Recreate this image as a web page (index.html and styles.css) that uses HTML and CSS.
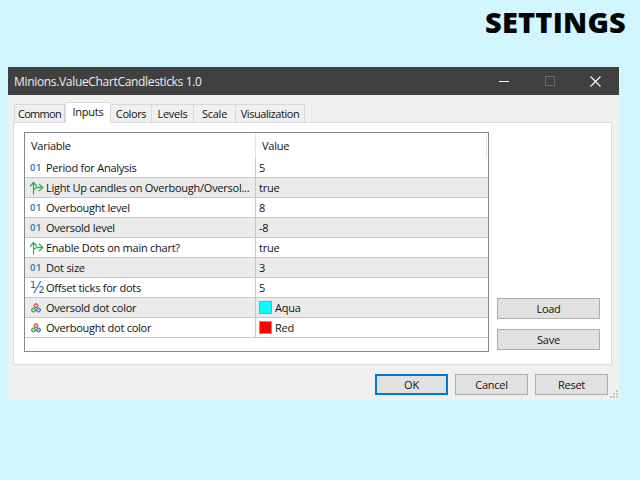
FILE: index.html
```html
<!DOCTYPE html>
<html lang="en">
<head>
<meta charset="utf-8">
<title>Settings</title>
<link rel="stylesheet" href="styles.css">
</head>
<body>
<svg class="defs" width="0" height="0" aria-hidden="true">
  <symbol id="arrows" viewBox="0 0 15 14">
    <path d="M4.5 13.5V2.5M1 5.5 4.5 1.5 8 5.5M4.5 9C6.5 5.5 9 6.5 13 6.5M10 3 13.8 6.5 10 10" fill="none" stroke="#1fb84a" stroke-width="1.2"/>
  </symbol>
  <symbol id="dots" viewBox="0 0 10 10">
    <circle cx="5" cy="2.7" r="2" fill="#f6a8a2" stroke="#d8402f" stroke-width="1"/>
    <circle cx="2.5" cy="7" r="2" fill="#a5dca5" stroke="#2f9a40" stroke-width="1"/>
    <circle cx="7.5" cy="7" r="2" fill="#a5c8f0" stroke="#2565b0" stroke-width="1"/>
  </symbol>
</svg>
<header class="banner"><h1 class="banner-title">SETTINGS</h1></header>
<main class="window">
  <div class="titlebar">
    <span class="title">Minions.ValueChartCandlesticks 1.0</span>
    <div class="controls">
      <span class="ctl ctl-min"></span>
      <span class="ctl ctl-max"></span>
      <svg class="ctl-close" width="11" height="11" viewBox="0 0 11 11"><path d="M.5.5 10.5 10.5M10.5.5.5 10.5" stroke="#fff" stroke-width="1.1"/></svg>
    </div>
  </div>
  <div class="tabs">
    <span class="tab tab-common">Common</span>
    <span class="tab tab-active">Inputs</span>
    <span class="tab tab-colors">Colors</span>
    <span class="tab tab-levels">Levels</span>
    <span class="tab tab-scale">Scale</span>
    <span class="tab tab-vis">Visualization</span>
  </div>
  <div class="panel">
    <div class="table">
      <div class="head">
        <div class="head-var">Variable</div>
        <div class="head-val">Value</div>
      </div>
      <div class="row"><div class="cell-name"><span class="ico ico-num">01</span>Period for Analysis</div><div class="cell-val">5</div></div>
      <div class="row alt"><div class="cell-name"><svg class="ico-svg"><use href="#arrows"/></svg>Light Up candles on Overbough/Oversol...</div><div class="cell-val">true</div></div>
      <div class="row"><div class="cell-name"><span class="ico ico-num">01</span>Overbought level</div><div class="cell-val">8</div></div>
      <div class="row alt"><div class="cell-name"><span class="ico ico-num">01</span>Oversold level</div><div class="cell-val">-8</div></div>
      <div class="row"><div class="cell-name"><svg class="ico-svg"><use href="#arrows"/></svg>Enable Dots on main chart?</div><div class="cell-val">true</div></div>
      <div class="row alt"><div class="cell-name"><span class="ico ico-num">01</span>Dot size</div><div class="cell-val">3</div></div>
      <div class="row"><div class="cell-name"><span class="ico ico-frac">½</span>Offset ticks for dots</div><div class="cell-val">5</div></div>
      <div class="row alt"><div class="cell-name"><svg class="ico-svg ico-dots"><use href="#dots"/></svg>Oversold dot color</div><div class="cell-val"><span class="swatch swatch-aqua"></span>Aqua</div></div>
      <div class="row"><div class="cell-name"><svg class="ico-svg ico-dots"><use href="#dots"/></svg>Overbought dot color</div><div class="cell-val"><span class="swatch swatch-red"></span>Red</div></div>
    </div>
    <div class="side">
      <button class="btn">Load</button>
      <button class="btn">Save</button>
    </div>
  </div>
  <div class="footer">
    <button class="btn btn-primary">OK</button>
    <button class="btn">Cancel</button>
    <button class="btn">Reset</button>
  </div>
  <svg class="grip" width="11" height="11" viewBox="0 0 11 11"><path d="M8 1h2v2H8zM5 4h2v2H5zM8 4h2v2H8zM2 7h2v2H2zM5 7h2v2H5zM8 7h2v2H8z" fill="#c4c4c4"/></svg>
</main>
</body>
</html>
```

FILE: styles.css
```css
* { box-sizing: border-box; }
html, body { height: 100%; }
body {
  margin: 0;
  background: #d1f6ff;
  font-family: "Open Sans", "Noto Sans", sans-serif;
  font-size: 11px;
  letter-spacing: -0.25px;
  color: #111;
  overflow: hidden;
}
.defs { position: absolute; }
.banner {
  height: 67px;
  display: flex;
  justify-content: flex-end;
  padding: 2px 14px 0 0;
}
.banner-title {
  margin: 0;
  font-family: "Open Sans", sans-serif;
  font-size: 29px;
  font-weight: 800;
  line-height: 40px;
  letter-spacing: 0.2px;
  color: #050505;
}
.window {
  position: relative;
  margin-left: 8px;
  width: 611px;
  height: 333px;
  background: #f0f0f0;
}
.titlebar {
  height: 28px;
  background: #404040;
  display: flex;
  align-items: center;
  justify-content: space-between;
  padding-left: 6px;
}
.title { color: #eee; font-size: 12px; letter-spacing: -0.33px; }
.controls { display: flex; align-items: center; }
.ctl-min { width: 10px; height: 1px; background: #fff; margin-right: 36px; }
.ctl-max { width: 10px; height: 10px; border: 1px solid #6b6b6b; margin-right: 35px; }
.ctl-close { margin-right: 18px; }
.tabs {
  display: flex;
  align-items: flex-end;
  height: 27px;
  padding-left: 6px;
}
.tab {
  height: 18px;
  border: 1px solid #d9d9d9;
  border-bottom: none;
  border-left: none;
  line-height: 18px;
  text-align: center;
  background: #f0f0f0;
  color: #111;
}
.tab-common { width: 51px; border-left: 1px solid #d9d9d9; letter-spacing: -0.7px; }
.tab-active {
  width: 46px;
  height: 21px;
  line-height: 18px;
  background: #fff;
  border-left: 1px solid #d9d9d9;
  margin-bottom: -1px;
  position: relative;
}
.tab-colors { width: 41px; letter-spacing: -0.4px; }
.tab-levels { width: 42px; }
.tab-scale { width: 42px; }
.tab-vis { width: 69px; letter-spacing: -0.45px; }
.panel {
  margin: 0 7px 0 5px;
  height: 243px;
  background: #fff;
  border: 1px solid #dcdcdc;
  padding: 9px 11px 0 10px;
  display: flex;
  justify-content: space-between;
}
.table {
  width: 465px;
  height: 220px;
  border: 1px solid #828790;
}
.head {
  height: 25px;
  display: grid;
  grid-template-columns: 231px 231px;
  align-items: center;
}
.head-var { padding-left: 6px; height: 25px; line-height: 25px; border-right: 1px solid #e5e5e5; }
.head-val { padding-left: 6px; height: 25px; line-height: 25px; border-right: 1px solid #e5e5e5; }
.row {
  height: 20px;
  display: grid;
  grid-template-columns: 231px 1fr;
  border-bottom: 1px solid #c8c8c8;
}
.alt { background: #ebebeb; }
.cell-name {
  display: flex;
  align-items: center;
  border-right: 1px solid #c8c8c8;
  padding-left: 4px;
  white-space: nowrap;
  overflow: hidden;
}
.cell-val {
  display: flex;
  align-items: center;
  padding-left: 3px;
}
.ico {
  width: 17px;
  flex: none;
  text-align: left;
  padding-left: 1px;
  color: #2f78b8;
}
.ico-num { font-family: Roboto, sans-serif; font-weight: 500; font-size: 9.5px; letter-spacing: 0.6px; }
.ico-frac { font-family: "DejaVu Sans", sans-serif; font-size: 15px; letter-spacing: 0; color: #2a68a0; line-height: 14px; }
.ico-svg { width: 15px; height: 14px; margin-right: 2px; flex: none; }
.ico-dots { width: 10px; height: 10px; margin: 0 5px 0 2px; }
.swatch {
  width: 13px;
  height: 13px;
  border: 1px solid #9a9a9a;
  margin-right: 3px;
  flex: none;
}
.swatch-aqua { background: #00ffff; }
.swatch-red { background: #ff0000; }
.side {
  width: 103px;
  padding-top: 166px;
  display: flex;
  flex-direction: column;
  gap: 10px;
}
.btn {
  width: 100%;
  height: 21px;
  padding: 0;
  background: #e1e1e1;
  border: 1px solid #adadad;
  font: inherit;
  letter-spacing: inherit;
  color: #111;
}
.footer {
  display: flex;
  justify-content: flex-end;
  gap: 7px;
  padding: 9px 11px 0 0;
}
.footer .btn { width: 73px; }
.footer .btn-primary { border: 2px solid #0078d7; }
.grip { position: absolute; right: 0; bottom: 0; }
```
